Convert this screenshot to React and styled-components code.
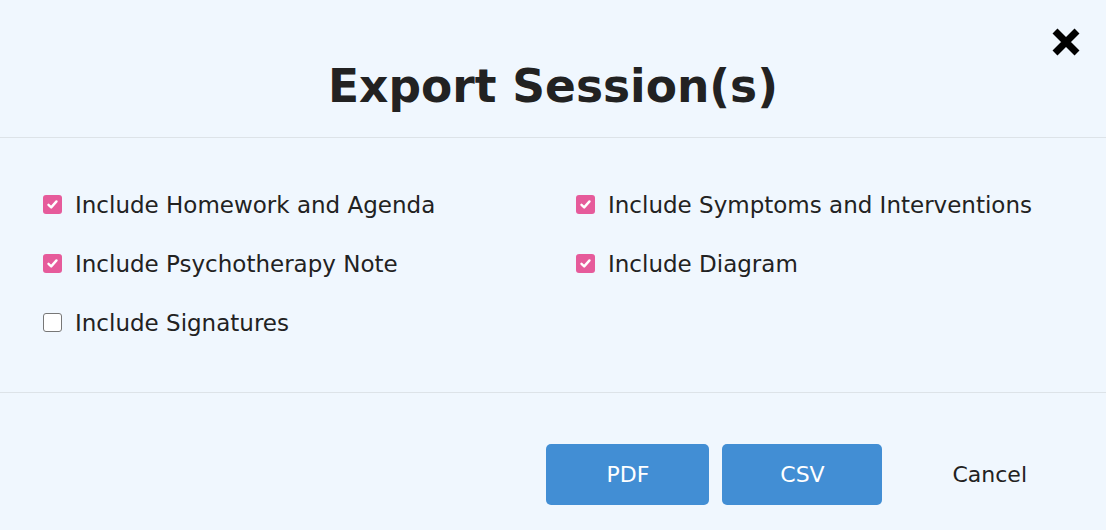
import React, { useState } from 'react';
import styled, { createGlobalStyle } from 'styled-components';

const Global = createGlobalStyle`
  html, body {
    margin: 0;
    padding: 0;
    background: #f0f7fe;
  }
  body {
    font-family: "DejaVu Sans", "Noto Sans", sans-serif;
    color: #222;
  }
`;

const Modal = styled.div`
  width: 1106px;
  height: 530px;
  background: #f0f7fe;
  display: flex;
  flex-direction: column;
  position: relative;
`;

const Header = styled.div`
  height: 138px;
  box-sizing: border-box;
  padding-top: 35px;
  display: flex;
  align-items: center;
  justify-content: center;
  border-bottom: 1px solid #dde3e8;
`;

const Title = styled.h1`
  margin: 0;
  font-size: 45.5px;
  font-weight: 700;
  color: #222;
`;

const Close = styled.button`
  position: absolute;
  top: 26px;
  right: 24px;
  width: 32px;
  height: 32px;
  border: 0;
  padding: 0;
  background: transparent;
  cursor: pointer;
  display: flex;
  align-items: center;
  justify-content: center;
`;

const Body = styled.div`
  height: 255px;
  box-sizing: border-box;
  padding: 37px 43px 0 43px;
  display: grid;
  grid-template-columns: 533px 1fr;
  grid-auto-rows: 59px;
  border-bottom: 1px solid #dde3e8;
`;

const Option = styled.label`
  display: flex;
  align-items: center;
  gap: 13px;
  font-size: 23px;
  color: #222;
  cursor: pointer;
`;

const Box = styled.span`
  flex: none;
  width: 19px;
  height: 19px;
  box-sizing: border-box;
  border-radius: 3px;
  display: flex;
  align-items: center;
  justify-content: center;
  background: ${({ checked }) => (checked ? '#e65b9b' : '#fff')};
  border: ${({ checked }) => (checked ? 'none' : '1.5px solid #777')};
`;

const Footer = styled.div`
  flex: 1;
  display: flex;
  align-items: flex-start;
  justify-content: flex-end;
  padding: 51px 79px 0 0;
  gap: 13px;
`;

const Primary = styled.button`
  width: ${({ w }) => w}px;
  height: 61px;
  border: 0;
  border-radius: 5px;
  background: #428ed4;
  color: #fff;
  font-family: inherit;
  font-size: 22px;
  cursor: pointer;
`;

const Cancel = styled.button`
  margin-left: 57px;
  height: 61px;
  border: 0;
  background: transparent;
  color: #222;
  font-family: inherit;
  font-size: 22px;
  padding: 0;
  cursor: pointer;
`;

const options = [
  { label: 'Include Homework and Agenda', checked: true },
  { label: 'Include Symptoms and Interventions', checked: true },
  { label: 'Include Psychotherapy Note', checked: true },
  { label: 'Include Diagram', checked: true },
  { label: 'Include Signatures', checked: false },
];

const Check = ({ checked }) => (
  <Box checked={checked}>
    {checked && (
      <svg width="13" height="13" viewBox="0 0 13 13">
        <path d="M2.5 6.8 L5.2 9.4 L10.5 3.4" fill="none" stroke="#fff" strokeWidth="2.4" strokeLinecap="round" strokeLinejoin="round" />
      </svg>
    )}
  </Box>
);

export default function App() {
  const [state, setState] = useState(options);
  const toggle = (i) =>
    setState((s) => s.map((o, j) => (j === i ? { ...o, checked: !o.checked } : o)));

  return (
    <Modal>
      <Global />
      <Header>
        <Title>Export Session(s)</Title>
      </Header>
      <Close aria-label="close">
        <svg width="32" height="32" viewBox="0 0 32 32">
          <path d="M5 5 L27 27 M27 5 L5 27" stroke="#000" strokeWidth="7" strokeLinecap="butt" />
        </svg>
      </Close>
      <Body>
        {state.map((o, i) => (
          <Option key={o.label} onClick={() => toggle(i)}>
            <Check checked={o.checked} />
            {o.label}
          </Option>
        ))}
      </Body>
      <Footer>
        <Primary w={163}>PDF</Primary>
        <Primary w={160}>CSV</Primary>
        <Cancel>Cancel</Cancel>
      </Footer>
    </Modal>
  );
}
